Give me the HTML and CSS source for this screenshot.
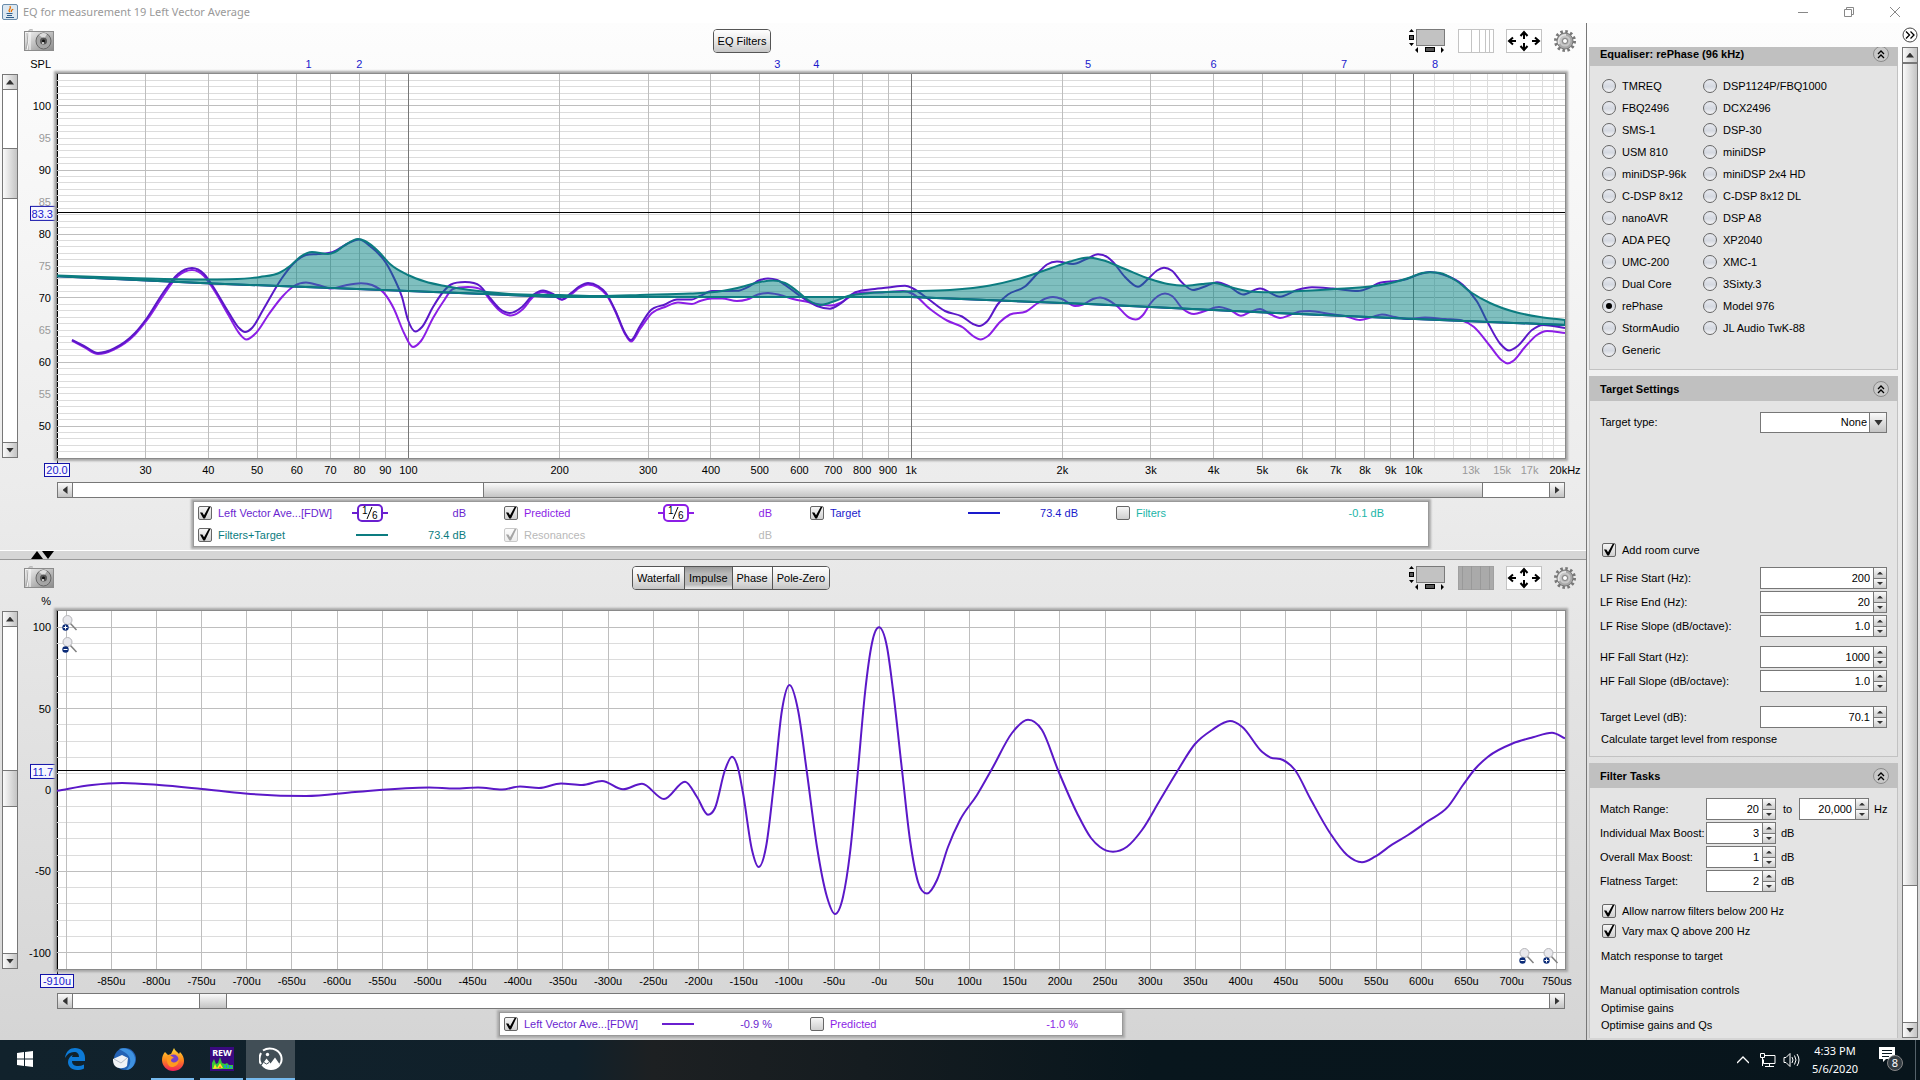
FILE: index.html
```html
<!DOCTYPE html>
<html lang="en">
<head>
  <meta charset="UTF-8">
  <meta name="viewport" content="width=device-width, initial-scale=1.0">
  <title>EQ for measurement 19 Left Vector Average</title>
  <link rel="stylesheet" href="styles.css">
</head>
<body>
  <!-- Shared icons -->
  <svg class="defs" width="0" height="0" aria-hidden="true">
    <defs>
      <linearGradient id="metal" x1="0" y1="0" x2="1" y2="1">
        <stop offset="0" stop-color="#f4f4f4"/>
        <stop offset="1" stop-color="#8a8a8a"/>
      </linearGradient>
      <linearGradient id="flame" x1="0" y1="0" x2="0" y2="1">
        <stop offset="0" stop-color="#ffd83a"/>
        <stop offset="0.5" stop-color="#ff8a1c"/>
        <stop offset="1" stop-color="#f0205a"/>
      </linearGradient>
      <symbol id="camera" viewBox="0 0 30 23">
        <path d="M4 2h2v-2h2v2" fill="none" stroke="#aaa"/>
        <rect x="0.500" y="2.500" width="29" height="19" fill="url(#metal)" stroke="#8c8c8c"/>
        <path d="M3 3q3 9 0 18M6 3v18" stroke="#fff" fill="none"/>
        <path d="M3 4q2 8-1 16" stroke="#aaa" fill="none"/>
        <ellipse cx="19.500" cy="12" rx="7.500" ry="8" fill="#a6a6a6" stroke="#666"/>
        <path d="M15 6a6 6 0 0 1 8-1l-3 5z" fill="#ddd"/>
        <circle cx="19.500" cy="12" r="3.500" fill="#555"/>
        <circle cx="19.500" cy="12" r="1.500" fill="#111"/>
        <circle cx="19" cy="14" r="1" fill="#eee"/>
      </symbol>
      <symbol id="scrollbars" viewBox="0 0 38 24">
        <rect x="8.500" y="0.500" width="28" height="16" fill="#c2c2c2" stroke="#7a7a7a"/>
        <path d="M1 3l2.500-3 2.500 3zM1 14l2.500 3 2.500-3zM10 18v6l-3-3zM33 18v6l3-3z" fill="#000"/>
        <rect x="1.500" y="6.500" width="4" height="4" fill="#555" stroke="#000"/>
        <rect x="17.500" y="18.500" width="9" height="4" fill="#555" stroke="#000"/>
      </symbol>
      <symbol id="arrows" viewBox="0 0 36 24">
        <rect x="0.500" y="0.500" width="35" height="23" fill="#fff" stroke="#c4c4c4"/>
        <g fill="none" stroke="#000" stroke-width="2">
          <path d="M18 10V4M14.500 7l3.500-4 3.500 4M18 14v6M14.500 17l3.500 4 3.500-4M10 12H4M7 8.500L3 12l4 3.500M26 12h6M29 8.500l4 3.500-4 3.500"/>
        </g>
      </symbol>
      <symbol id="gear" viewBox="0 0 22 22">
        <circle cx="11" cy="11" r="9.500" fill="none" stroke="#777" stroke-width="3" stroke-dasharray="2.500 2.475"/>
        <circle cx="11" cy="11" r="8" fill="#a8a8a8" stroke="#777"/>
        <path d="M5 14a7 7 0 0 1 7-9" fill="none" stroke="#e6e6e6" stroke-width="2"/>
        <circle cx="11" cy="11" r="4.500" fill="none" stroke="#c8c8c8" stroke-width="2"/>
        <circle cx="11" cy="11" r="2.500" fill="#fff" stroke="#808080"/>
      </symbol>
      <symbol id="collapse" viewBox="0 0 16 16">
        <circle cx="8" cy="8" r="7.500" fill="#c8c8c8" stroke="#8a8a8a"/>
        <path d="M5 8l3-3 3 3M5 12l3-3 3 3" fill="none" stroke="#000" stroke-width="1.300"/>
      </symbol>
      <symbol id="lens-in" viewBox="0 0 16 16">
        <path d="M8 8l6.500 7" stroke="#808080" stroke-width="1.500"/>
        <circle cx="5.500" cy="5" r="4.500" fill="#e8e8ec" stroke="#b4b4b8"/>
        <circle cx="3.500" cy="12.500" r="3.200" fill="#0c2c78"/>
        <path d="M1.500 12.500h4M3.500 10.500v4" stroke="#fff"/>
      </symbol>
      <symbol id="lens-out" viewBox="0 0 16 16">
        <path d="M8 8l6.500 7" stroke="#808080" stroke-width="1.500"/>
        <circle cx="5.500" cy="5" r="4.500" fill="#e8e8ec" stroke="#b4b4b8"/>
        <circle cx="3.500" cy="12.500" r="3.200" fill="#0c2c78"/>
        <path d="M1.500 12.500h4" stroke="#fff"/>
      </symbol>
      <symbol id="smoothing" viewBox="0 0 36 20">
        <path d="M0 10h6M30 10h6" stroke="currentColor" stroke-width="2"/>
        <rect x="6" y="2" width="24" height="16" rx="4" fill="#fff" stroke="currentColor" stroke-width="2"/>
        <path d="M15 16l5-12" stroke="#000"/>
        <text x="10" y="11" font-size="10">1</text>
        <text x="20" y="16" font-size="10">6</text>
      </symbol>
      <symbol id="trace" viewBox="0 0 36 20">
        <path d="M4 10h32" stroke="currentColor" stroke-width="2"/>
      </symbol>
    </defs>
  </svg>

  <header class="titlebar">
    <svg width="16" height="16" viewBox="0 0 16 16">
      <rect x="0.500" y="0.500" width="15" height="15" rx="1.500" fill="#dce8f2" stroke="#6a8cab"/>
      <path d="M8 8c-3-2 2-3 0-6M9.500 8c-1-2 1-2 1.500-3" fill="none" stroke="#e76f00" stroke-width="1.300"/>
      <path d="M4.500 9.500h6M5 11.500h5M4 13.500h8" stroke="#2f5f8c"/>
    </svg>
    <h1>EQ for measurement 19 Left Vector Average</h1>
    <div class="window-buttons">
      <button aria-label="Minimise"><svg width="10" height="10"><path d="M0 5.500h10" stroke="#888"/></svg></button>
      <button aria-label="Restore"><svg width="10" height="10"><path d="M0.500 2.500h7v7h-7zM2.500 2.500v-2h7v7h-2" fill="none" stroke="#888"/></svg></button>
      <button aria-label="Close"><svg width="10" height="10"><path d="M0 0l10 10M10 0L0 10" stroke="#888"/></svg></button>
    </div>
  </header>

  <main>
    <div class="graphs">
      <!-- SPL graph -->
      <section class="panel">
        <div class="toolbar">
          <button class="icon" aria-label="Capture"><svg width="30" height="23"><use href="#camera"/></svg></button>
          <div class="views single"><button>EQ Filters</button></div>
          <div class="tools">
            <button class="icon" aria-label="Scrollbars"><svg width="38" height="24"><use href="#scrollbars"/></svg></button>
            <button class="icon" aria-label="Log frequency axis"><svg width="36" height="24"><rect x="0.500" y="0.500" width="35" height="23" fill="#fff" stroke="#c4c4c4"/><path d="M13.500 0v24M21.500 0v24M27.500 0v24M31.500 0v24" stroke="#c4c4c4"/></svg></button>
            <button class="icon" aria-label="Limits"><svg width="36" height="24"><use href="#arrows"/></svg></button>
            <button class="icon" aria-label="Controls"><svg width="22" height="22"><use href="#gear"/></svg></button>
          </div>
        </div>
        <div class="unit">SPL</div>
        <svg class="markers" id="spl-markers"></svg>
        <div class="scroll vertical spl-v">
          <button class="up" aria-label="Up"></button><div class="thumb"></div><button class="down" aria-label="Down"></button>
        </div>
        <svg class="y-axis" id="spl-y"></svg>
        <div class="plot"><svg id="spl-plot"></svg></div>
        <svg class="x-axis" id="spl-x"></svg>
        <div class="scroll horizontal spl-h">
          <button class="left" aria-label="Left"></button><div class="thumb"></div><button class="right" aria-label="Right"></button>
        </div>
        <div class="legend four">
          <div class="entry measured"><input type="checkbox" id="l1" checked><label for="l1">Left Vector Ave...[FDW]</label><svg><use href="#smoothing"/></svg><span>dB</span></div>
          <div class="entry predicted"><input type="checkbox" id="l2" checked><label for="l2">Predicted</label><svg><use href="#smoothing"/></svg><span>dB</span></div>
          <div class="entry target"><input type="checkbox" id="l3" checked><label for="l3">Target</label><svg><use href="#trace"/></svg><span>73.4 dB</span></div>
          <div class="entry filters"><input type="checkbox" id="l4"><label for="l4">Filters</label><svg></svg><span>-0.1 dB</span></div>
          <div class="entry combined"><input type="checkbox" id="l5" checked><label for="l5">Filters+Target</label><svg><use href="#trace"/></svg><span>73.4 dB</span></div>
          <div class="entry resonances"><input type="checkbox" id="l6" checked disabled><label for="l6">Resonances</label><svg></svg><span>dB</span></div>
        </div>
      </section>

      <div class="divider"><svg width="24" height="8"><path d="M0 8l6-8 6 8zM11 0h12l-6 8z"/></svg></div>

      <!-- Impulse graph -->
      <section class="panel">
        <div class="toolbar">
          <button class="icon" aria-label="Capture"><svg width="30" height="23"><use href="#camera"/></svg></button>
          <div class="views"><button>Waterfall</button><button class="selected">Impulse</button><button>Phase</button><button>Pole-Zero</button></div>
          <div class="tools">
            <button class="icon" aria-label="Scrollbars"><svg width="38" height="24"><use href="#scrollbars"/></svg></button>
            <button class="icon" aria-label="Linear axis"><svg width="36" height="24"><rect x="0.500" y="0.500" width="35" height="23" fill="#aaa" stroke="#a0a0a0"/><path d="M4.500 0v24M13.500 0v24M22.500 0v24M31.500 0v24" stroke="#999"/></svg></button>
            <button class="icon" aria-label="Limits"><svg width="36" height="24"><use href="#arrows"/></svg></button>
            <button class="icon" aria-label="Controls"><svg width="22" height="22"><use href="#gear"/></svg></button>
          </div>
        </div>
        <div class="unit">%</div>
        <div class="markers"></div>
        <div class="scroll vertical imp-v">
          <button class="up" aria-label="Up"></button><div class="thumb"></div><button class="down" aria-label="Down"></button>
        </div>
        <svg class="y-axis" id="imp-y"></svg>
        <div class="plot">
          <svg id="imp-plot"></svg>
          <div class="zoom-y">
            <button class="icon" aria-label="Zoom in vertically"><svg width="16" height="16"><use href="#lens-in"/></svg></button>
            <button class="icon" aria-label="Zoom out vertically"><svg width="16" height="16"><use href="#lens-out"/></svg></button>
          </div>
          <div class="zoom-x">
            <button class="icon" aria-label="Zoom out horizontally"><svg width="16" height="16"><use href="#lens-out"/></svg></button>
            <button class="icon" aria-label="Zoom in horizontally"><svg width="16" height="16"><use href="#lens-in"/></svg></button>
          </div>
        </div>
        <svg class="x-axis" id="imp-x"></svg>
        <div class="scroll horizontal imp-h">
          <button class="left" aria-label="Left"></button><div class="thumb"></div><button class="right" aria-label="Right"></button>
        </div>
        <div class="legend two">
          <div class="entry measured"><input type="checkbox" id="m1" checked><label for="m1">Left Vector Ave...[FDW]</label><svg><use href="#trace"/></svg><span>-0.9 %</span></div>
          <div class="entry predicted"><input type="checkbox" id="m2"><label for="m2">Predicted</label><svg></svg><span>-1.0 %</span></div>
        </div>
      </section>
    </div>

    <aside>
      <button class="icon hide-panel" aria-label="Hide panel"><svg width="16" height="16" viewBox="0 0 16 16"><circle cx="8" cy="8" r="7" fill="#fff" stroke="#444"/><path d="M4 4.500L7.500 8 4 11.500M8.500 4.500L12 8l-3.500 3.500" fill="none" stroke="#000" stroke-width="1.300"/></svg></button>
      <div class="sections">
        <section>
          <h2>Equaliser: rePhase (96 kHz)<button class="icon" aria-label="Collapse"><svg width="16" height="16"><use href="#collapse"/></svg></button></h2>
          <div class="body equalisers">
            <label><input type="radio" name="eq">TMREQ</label>
            <label><input type="radio" name="eq">DSP1124P/FBQ1000</label>
            <label><input type="radio" name="eq">FBQ2496</label>
            <label><input type="radio" name="eq">DCX2496</label>
            <label><input type="radio" name="eq">SMS-1</label>
            <label><input type="radio" name="eq">DSP-30</label>
            <label><input type="radio" name="eq">USM 810</label>
            <label><input type="radio" name="eq">miniDSP</label>
            <label><input type="radio" name="eq">miniDSP-96k</label>
            <label><input type="radio" name="eq">miniDSP 2x4 HD</label>
            <label><input type="radio" name="eq">C-DSP 8x12</label>
            <label><input type="radio" name="eq">C-DSP 8x12 DL</label>
            <label><input type="radio" name="eq">nanoAVR</label>
            <label><input type="radio" name="eq">DSP A8</label>
            <label><input type="radio" name="eq">ADA PEQ</label>
            <label><input type="radio" name="eq">XP2040</label>
            <label><input type="radio" name="eq">UMC-200</label>
            <label><input type="radio" name="eq">XMC-1</label>
            <label><input type="radio" name="eq">Dual Core</label>
            <label><input type="radio" name="eq">3Sixty.3</label>
            <label><input type="radio" name="eq" checked>rePhase</label>
            <label><input type="radio" name="eq">Model 976</label>
            <label><input type="radio" name="eq">StormAudio</label>
            <label><input type="radio" name="eq">JL Audio TwK-88</label>
            <label><input type="radio" name="eq">Generic</label>
          </div>
        </section>

        <section>
          <h2>Target Settings<button class="icon" aria-label="Collapse"><svg width="16" height="16"><use href="#collapse"/></svg></button></h2>
          <div class="body settings">
            <div class="row type">
              <label for="type">Target type:</label>
              <span class="select"><select id="type"><option>None</option></select></span>
            </div>
            <label class="check room"><input type="checkbox" checked>Add room curve</label>
            <div class="row"><label for="lfs">LF Rise Start (Hz):</label><span class="spinner"><input type="text" id="lfs" value="200"><button class="up" aria-label="Increase"></button><button class="down" aria-label="Decrease"></button></span></div>
            <div class="row"><label for="lfe">LF Rise End (Hz):</label><span class="spinner"><input type="text" id="lfe" value="20"><button class="up" aria-label="Increase"></button><button class="down" aria-label="Decrease"></button></span></div>
            <div class="row"><label for="lfr">LF Rise Slope (dB/octave):</label><span class="spinner"><input type="text" id="lfr" value="1.0"><button class="up" aria-label="Increase"></button><button class="down" aria-label="Decrease"></button></span></div>
            <div class="row hf"><label for="hfs">HF Fall Start (Hz):</label><span class="spinner"><input type="text" id="hfs" value="1000"><button class="up" aria-label="Increase"></button><button class="down" aria-label="Decrease"></button></span></div>
            <div class="row"><label for="hfr">HF Fall Slope (dB/octave):</label><span class="spinner"><input type="text" id="hfr" value="1.0"><button class="up" aria-label="Increase"></button><button class="down" aria-label="Decrease"></button></span></div>
            <div class="row level"><label for="lvl">Target Level (dB):</label><span class="spinner"><input type="text" id="lvl" value="70.1"><button class="up" aria-label="Increase"></button><button class="down" aria-label="Decrease"></button></span></div>
            <button class="task">Calculate target level from response</button>
          </div>
        </section>

        <section>
          <h2>Filter Tasks<button class="icon" aria-label="Collapse"><svg width="16" height="16"><use href="#collapse"/></svg></button></h2>
          <div class="body tasks">
            <div class="row"><label for="from">Match Range:</label><span class="spinner"><input type="text" id="from" value="20"><button class="up" aria-label="Increase"></button><button class="down" aria-label="Decrease"></button></span><label class="to" for="upto">to</label><span class="spinner"><input type="text" id="upto" value="20,000"><button class="up" aria-label="Increase"></button><button class="down" aria-label="Decrease"></button></span><span>Hz</span></div>
            <div class="row"><label for="ind">Individual Max Boost:</label><span class="spinner"><input type="text" id="ind" value="3"><button class="up" aria-label="Increase"></button><button class="down" aria-label="Decrease"></button></span><span>dB</span></div>
            <div class="row"><label for="ovr">Overall Max Boost:</label><span class="spinner"><input type="text" id="ovr" value="1"><button class="up" aria-label="Increase"></button><button class="down" aria-label="Decrease"></button></span><span>dB</span></div>
            <div class="row"><label for="flat">Flatness Target:</label><span class="spinner"><input type="text" id="flat" value="2"><button class="up" aria-label="Increase"></button><button class="down" aria-label="Decrease"></button></span><span>dB</span></div>
            <div class="checks">
              <label class="check"><input type="checkbox" checked>Allow narrow filters below 200 Hz</label>
              <label class="check"><input type="checkbox" checked>Vary max Q above 200 Hz</label>
            </div>
            <button class="task match">Match response to target</button>
            <p>Manual optimisation controls</p>
            <button class="task">Optimise gains</button>
            <button class="task">Optimise gains and Qs</button>
            <button class="task">Optimise gains, Qs and frequencies</button>
          </div>
        </section>
      </div>
      <div class="scroll vertical side-v">
        <button class="up" aria-label="Up"></button><div class="thumb"></div><button class="down" aria-label="Down"></button>
      </div>
    </aside>
  </main>

  <footer class="taskbar">
    <button class="start" aria-label="Start"><svg width="16" height="18" viewBox="0 0 16 18"><path d="M0 3l7-1v6.500H0zM8 2l8-1v7.500H8zM0 9.500h7V16l-7-1zM8 9.500h8V17l-8-1z" fill="#fff"/></svg></button>
    <button aria-label="Edge"><svg width="20" height="22" viewBox="0 0 20 22"><path d="M0 10C1 3 5 0 10 0c6 0 10 4 10 10v3H7c0 4 3 5 6 5 2 0 4-.500 6-1.500v4C17 21.500 14.500 22 12 22c-6 0-9-4-9-8 0-3 2-6 5-7C7 8 7 9 7 9h7c0-3-1.500-5-5-5-4 0-7 2-9 6z" fill="#0d7ad6"/></svg></button>
    <button aria-label="Thunderbird"><svg width="24" height="24" viewBox="0 0 24 24"><circle cx="13" cy="12" r="11" fill="#2462b4"/><path d="M7 2c9-3 17 4 16 12-1 6-5 9-9 9 5-5 6-11 1-16-2-2-5-3-8-5z" fill="#3f92e0"/><path d="M1 12l9-4 6 3-1 8c-3 3-9 3-12 0-2-2-2-5-2-7z" fill="#f1f3f6"/><path d="M2 12l7 4 6-5" fill="none" stroke="#b4bcc8"/></svg></button>
    <button class="open" aria-label="Firefox"><svg width="24" height="24" viewBox="0 0 24 24"><path d="M4 5l3 3 3-1 3-6c1 3 4 4 5 6l1-2c3 3 4 6 4 9 0 6-5 10-11 10S1 19 1 13c0-3 1-6 3-8z" fill="url(#flame)"/><circle cx="12.500" cy="12.500" r="5" fill="#7640c8"/><path d="M6 9c3-1 5 0 7 2-2 0-3 1-3 3 3 3 6 1 8-2 0 6-4 8-7 8-4 0-6-5-5-11z" fill="#ff9a1f"/></svg></button>
    <button class="open" aria-label="REW"><svg width="24" height="24" viewBox="0 0 24 24"><rect width="24" height="24" fill="#3a0a80"/><text x="12" y="9" text-anchor="middle" font-size="9" font-weight="bold" fill="#fff">REW</text><path d="M2 22V16l2-4 2 5 2-1 2-6 2 6 3 1 2-1 2 2h4v4z" fill="#35c838"/><path d="M3 22l2-5 2 4 3-5 3 5z" fill="#ffe02a"/><path d="M9 21l1-2 1 2z" fill="#e33"/><path d="M15 21v-3M18 21v-3M21 21v-2" stroke="#18a0c8" stroke-width="2"/></svg></button>
    <button class="open active" aria-label="Photos"><svg width="24" height="24" viewBox="0 0 24 24"><path d="M4 3.500c6-4 15-2 18 5 1 3 1 6-1 9M2 6c-2 4-2 8 0 11" fill="none" stroke="#fff" stroke-width="2"/><circle cx="8.500" cy="7.500" r="1.700" fill="#fff"/><path d="M2.500 18.500l5-7 4 5 4.500-6 5.500 8c-5 6-14 6-19 0z" fill="#fff"/><path d="M5 15.500l2.500 1.500 2.500-1.500" stroke="#414e56" fill="none"/></svg></button>
    <div class="tray">
      <button aria-label="Show hidden icons"><svg width="12" height="8"><path d="M0 7l6-6 6 6" fill="none" stroke="#fff" stroke-width="1.300"/></svg></button>
      <button aria-label="Network"><svg width="17" height="14"><path d="M5 2.500h11v8H4.500v-4M10.500 10v3M6 13.500h9M1.500 0.500h4v4h-4zM3.500 5v8" fill="none" stroke="#fff"/></svg></button>
      <button aria-label="Volume"><svg width="17" height="16"><path d="M1 5.500h2l4-4v13l-4-4H1zM9 5q2 3 0 6M11.500 3.500q3 4.500 0 9M14 2q4 6 0 12" fill="none" stroke="#fff"/></svg></button>
    </div>
    <div class="clock"><time>4:33 PM</time><time>5/6/2020</time></div>
    <button class="notify" aria-label="Notifications"><svg width="26" height="26" viewBox="0 0 26 26"><path d="M1 1h16v12H8l-3 3v-3H1z" fill="#fff"/><path d="M4 4.500h10M4 7.500h10M4 10.500h7" stroke="#0b1a22"/><circle cx="17" cy="17" r="7.500" fill="#333c42" stroke="#888"/><text x="17" y="21" text-anchor="middle" font-size="11" fill="#fff">8</text></svg></button>
    <button class="desktop" aria-label="Show desktop"></button>
  </footer>
  <script src="script.js"></script>
</body>
</html>
```

FILE: styles.css
```css
* {
  box-sizing: border-box;
}

body {
  margin: 0;
  height: 100vh;
  display: flex;
  flex-direction: column;
  overflow: hidden;
  font-family: "Liberation Sans", Arial, sans-serif;
  font-size: 11px;
  color: #000;
}

button, input, select {
  font: inherit;
  color: inherit;
  margin: 0;
}

button {
  padding: 0;
  border: none;
  background: none;
}

svg {
  display: block;
}

.defs {
  position: absolute;
}

/* Title bar */
.titlebar {
  flex: 0 0 23px;
  display: flex;
  align-items: center;
  gap: 5px;
  padding: 0 2px;
  background: #fff;
}

.titlebar h1 {
  margin: 0;
  flex: 1;
  font: 11px "Noto Sans", "Open Sans", sans-serif;
  color: #999;
}

.window-buttons {
  display: flex;
}

.window-buttons button {
  width: 46px;
  height: 20px;
  display: grid;
  place-items: center;
}

main {
  flex: 1;
  min-height: 0;
  display: flex;
  background: linear-gradient(#fdfdfd, #ececec 45%, #d5d5d5);
}

/* Graph area */
.graphs {
  flex: 1;
  min-width: 0;
  display: grid;
  grid-template-rows: 527fr 10px 480fr;
}

.panel {
  min-height: 0;
  display: grid;
  grid-template-columns: 18px 39px 1fr 21px;
  grid-template-rows: 35px 16px 1fr 24px 16px auto;
}

.toolbar {
  grid-column: 1 / -1;
  display: flex;
  align-items: center;
  justify-content: space-between;
  padding: 0 10px 0 24px;
}

.tools {
  display: flex;
  align-items: center;
  gap: 12px;
}

.views {
  display: flex;
  border: 1px solid #555;
  border-radius: 4px;
  overflow: hidden;
}

.views.single {
  margin-left: 22px;
}

.views button {
  height: 22px;
  padding: 0 4px;
  background: linear-gradient(#fff, #ececec 45%, #c6c6c6);
}

.views button + button {
  border-left: 1px solid #555;
}

.views .selected {
  background: linear-gradient(#999, #b8b8b8 30%, #bbb 80%, #eee);
}

.unit {
  grid-column: 1 / 3;
  padding-right: 6px;
  text-align: right;
  line-height: 13px;
}

.markers {
  grid-column: 3;
  width: 100%;
  height: 16px;
  overflow: visible;
}

.markers text {
  fill: #1a1acc;
}

.y-axis {
  grid-column: 2;
  grid-row: 3;
  width: 100%;
  height: 100%;
  overflow: visible;
}

.y-axis text {
  text-anchor: end;
}

.x-axis {
  grid-column: 3;
  width: 100%;
  height: 24px;
  overflow: visible;
}

.x-axis text, .markers text {
  text-anchor: middle;
}

.dim {
  fill: #999;
}

.readout rect {
  fill: #f6f6ff;
  stroke: #1212a8;
}

.readout text {
  fill: #1a1acc;
}

.plot {
  position: relative;
  grid-column: 3;
  grid-row: 3;
  min-height: 0;
  background: #fff;
  box-shadow: inset 1px 0 #000, 0 0 0 1px #8a8a8a, 0 0 2px 3px #a8a8a8;
}

.plot > svg {
  position: absolute;
  width: 100%;
  height: 100%;
}

.zoom-y, .zoom-x {
  position: absolute;
  display: flex;
}

.zoom-y {
  left: 5px;
  top: 4px;
  flex-direction: column;
  gap: 6px;
}

.zoom-x {
  right: 6px;
  bottom: 5px;
  gap: 8px;
}

.grid {
  shape-rendering: crispEdges;
}

.minor {
  stroke: #dcdcdc;
}

.major {
  stroke: #bebebe;
}

.decade {
  stroke: #777;
}

.cursor {
  stroke: #000;
}

.curve {
  fill: none;
  stroke-width: 2;
  vector-effect: non-scaling-stroke;
}

.curve.measured {
  stroke: #5b18c8;
}

.curve.predicted {
  stroke: #8c1ee6;
}

.curve.target {
  stroke: #1010a0;
}

.curve.area {
  fill: rgba(0, 128, 128, 0.5);
  stroke: #0c7c80;
}

/* Scroll bars */
.scroll {
  display: grid;
  border: 1px solid #777;
  background: #fff;
}

.scroll button, .scroll .thumb {
  background: linear-gradient(90deg, #fafafa, #c4c4c4);
}

.scroll button {
  display: grid;
  place-items: center;
}

.vertical {
  width: 16px;
  margin-left: 2px;
}

.panel .vertical {
  grid-column: 1;
  grid-row: 3;
}

.vertical .up, .vertical .thumb {
  border-bottom: 1px solid #777;
}

.vertical .down, .vertical .thumb {
  border-top: 1px solid #777;
}

.vertical .thumb, .vertical .down {
  grid-column: 1;
}

.vertical .thumb {
  grid-row: 3;
}

.vertical .down {
  grid-row: 5;
}

.spl-v {
  grid-template-rows: 15px 58fr 51fr 244fr 15px;
}

.imp-v {
  grid-template-rows: 15px 144fr 37fr 147fr 15px;
}

.side-v {
  grid-template-rows: 15px 0 823fr 136fr 15px;
}

.horizontal {
  grid-column: 3;
}

.horizontal > * {
  grid-row: 1;
}

.horizontal button, .horizontal .thumb {
  background: linear-gradient(#fafafa, #c4c4c4);
}

.horizontal .left, .horizontal .thumb {
  border-right: 1px solid #777;
}

.horizontal .right, .horizontal .thumb {
  border-left: 1px solid #777;
}

.horizontal .thumb {
  grid-column: 3;
}

.horizontal .right {
  grid-column: 5;
}

.spl-h {
  grid-template-columns: 15px 410fr 1000fr 66fr 15px;
}

.imp-h {
  grid-template-columns: 15px 126fr 28fr 1324fr 15px;
}

.up::before, .down::before, .left::before, .right::before {
  content: "";
  background: #333;
}

.up::before {
  width: 8px;
  height: 5px;
  clip-path: polygon(50% 0, 100% 100%, 0 100%);
}

.down::before {
  width: 8px;
  height: 5px;
  clip-path: polygon(0 0, 100% 0, 50% 100%);
}

.left::before {
  width: 5px;
  height: 8px;
  clip-path: polygon(100% 0, 100% 100%, 0 50%);
}

.right::before {
  width: 5px;
  height: 8px;
  clip-path: polygon(0 0, 100% 50%, 0 100%);
}

/* Legends */
.legend {
  grid-column: 3;
  justify-self: center;
  display: grid;
  grid-auto-rows: 22px;
  padding: 0 6px 0 4px;
  background: #fff;
  border: 1px solid #999;
  box-shadow: 0 0 2px 2px #aaa;
}

.legend.four {
  grid-template-columns: repeat(4, 306px);
  margin: 3px 0;
}

.legend.two {
  grid-template-columns: repeat(2, 306px);
  margin: 3px 0 4px;
}

.entry {
  display: grid;
  grid-template-columns: 20px 134px 36px 78px;
  align-items: center;
}

.entry svg {
  width: 36px;
  height: 20px;
}

.entry svg text {
  fill: #000;
}

.entry span {
  text-align: right;
}

.entry.measured {
  color: #6a1fd0;
}

.entry.predicted {
  color: #8c1ee6;
}

.entry.target {
  color: #1a1acc;
}

.entry.filters {
  color: #1bb5a8;
}

.entry.combined {
  color: #0c7c80;
}

.entry.resonances {
  color: #b8b8b8;
}

input[type="checkbox"], input[type="radio"] {
  appearance: none;
  width: 14px;
  height: 14px;
  border: 1px solid #666;
  border-radius: 2px;
  background: linear-gradient(#f6f6f6, #cfcfcf);
  display: grid;
  place-items: center;
}

input[type="checkbox"]:checked::before {
  content: "";
  width: 12px;
  height: 12px;
  background: #000;
  clip-path: polygon(8% 45%, 28% 45%, 42% 68%, 80% 0, 95% 0, 50% 95%, 36% 95%);
}

input[type="checkbox"]:disabled {
  opacity: 0.35;
}

input[type="radio"] {
  border-radius: 50%;
  background: linear-gradient(#e8eaf0, #d4d8e0 55%, #f4f4f6);
}

input[type="radio"]:checked::before {
  content: "";
  width: 6px;
  height: 6px;
  border-radius: 50%;
  background: #000;
}

.divider {
  display: flex;
  align-items: center;
  padding-left: 31px;
  background: #d6d6d6;
  border-top: 1px solid #fff;
  border-bottom: 1px solid #999;
}

/* Side panel */
aside {
  flex: 0 0 334px;
  border-left: 1px solid #777;
  display: grid;
  grid-template-columns: 1fr 20px;
  grid-template-rows: 24px 1fr;
  padding-bottom: 2px;
}

.hide-panel {
  grid-column: 2;
  justify-self: center;
  align-self: center;
}

.sections {
  min-height: 0;
  overflow: hidden;
  padding: 0 2px;
  display: flex;
  flex-direction: column;
  gap: 6px;
}

.sections section {
  flex: none;
}

.sections section:first-child {
  margin-top: -6px;
}

.sections h2 {
  margin: 0;
  height: 25px;
  padding: 0 9px 0 11px;
  display: flex;
  align-items: center;
  justify-content: space-between;
  font-size: 11px;
  background: #c0c0c0;
}

.body {
  border: 1px solid #c2c2c2;
  border-top: none;
  background: #e4e4e4;
  padding-left: 10px;
}

.equalisers {
  display: grid;
  grid-template-columns: 101px 1fr;
  grid-auto-rows: 22px;
  padding: 9px 0 8px 12px;
}

.equalisers label, .check {
  display: flex;
  align-items: center;
  gap: 6px;
}

.row {
  display: flex;
  align-items: center;
  height: 22px;
  margin-bottom: 2px;
}

.settings {
  padding-top: 10px;
  padding-right: 10px;
  padding-bottom: 9px;
}

.settings .row {
  justify-content: space-between;
}

.settings .spinner, .select {
  width: 127px;
}

.settings .type {
  margin-bottom: 107px;
}

.settings .room {
  margin-bottom: 7px;
}

.check {
  height: 20px;
  padding-left: 2px;
}

.settings .hf {
  margin-top: 9px;
}

.settings .level {
  margin-top: 14px;
}

.select {
  position: relative;
}

.select select {
  appearance: none;
  width: 100%;
  height: 21px;
  padding: 0 19px 0 4px;
  text-align: right;
  text-align-last: right;
  border: 1px solid #777;
  border-radius: 0;
  background: #fff;
}

.select::before {
  content: "";
  position: absolute;
  right: 1px;
  top: 1px;
  bottom: 1px;
  width: 16px;
  border-left: 1px solid #777;
  background: linear-gradient(#fafafa, #c4c4c4);
  pointer-events: none;
}

.select::after {
  content: "";
  position: absolute;
  right: 4px;
  top: 8px;
  width: 9px;
  height: 6px;
  background: #333;
  clip-path: polygon(0 0, 100% 0, 50% 100%);
  pointer-events: none;
}

.spinner {
  display: grid;
  grid-template-columns: 1fr 12px;
  grid-template-rows: 1fr 1fr;
  width: 70px;
  height: 22px;
  border: 1px solid #777;
}

.spinner input {
  grid-row: 1 / 3;
  min-width: 0;
  width: 100%;
  height: 20px;
  padding: 0 3px;
  border: none;
  border-right: 1px solid #777;
  text-align: right;
  background: #fff;
}

.spinner button {
  display: grid;
  place-items: center;
  background: linear-gradient(#fafafa, #ccc);
}

.spinner .down {
  border-top: 1px solid #777;
}

.spinner .up::before, .spinner .down::before {
  width: 6px;
  height: 3px;
}

.task {
  display: block;
  height: 17px;
  padding-left: 1px;
}

.tasks {
  padding-top: 10px;
}

.tasks .row label:first-child {
  width: 106px;
}

.tasks .row > span:last-child {
  margin-left: 5px;
}

.tasks .to {
  width: 23px;
  text-align: center;
}

.checks {
  margin-top: 9px;
}

.tasks .match {
  margin: 6px 0 18px;
}

.tasks p {
  margin: 0;
  line-height: 17px;
}

/* Taskbar */
.taskbar {
  flex: 0 0 40px;
  display: flex;
  background: linear-gradient(90deg, #11222c, #10202a 30%, #1d2022 34%, #151c20 45%, #08161d 60%, #08151c);
  color: #fff;
  font-family: "Noto Sans", "Open Sans", sans-serif;
}

.taskbar button {
  display: grid;
  place-items: center;
}

.taskbar > button {
  width: 49px;
  border-bottom: 2px solid transparent;
}

.taskbar > .start {
  width: 50px;
}

.taskbar > .open {
  border-image: linear-gradient(90deg, transparent 10%, #76b9ed 10%, #76b9ed 90%, transparent 90%) 2;
}

.taskbar > .active {
  background: #414e56;
  border-image: none;
  border-color: #76b9ed;
}

.tray {
  margin-left: auto;
  display: flex;
  align-items: center;
}

.tray button {
  width: 24px;
  height: 40px;
}

.clock {
  width: 64px;
  display: flex;
  flex-direction: column;
  justify-content: center;
  text-align: center;
  line-height: 18px;
}

.taskbar > .notify {
  width: 48px;
}

.taskbar > .desktop {
  width: 5px;
  border: none;
  border-left: 1px solid #55626a;
}
```

FILE: script.js
```javascript
const NS = 'http://www.w3.org/2000/svg';

function add(parent, tag, attrs, text) {
  const el = document.createElementNS(NS, tag);
  for (const name in attrs) el.setAttribute(name, attrs[name]);
  if (text !== undefined) el.textContent = text;
  parent.appendChild(el);
  return el;
}

const byId = id => document.getElementById(id);
const pct = v => (v * 100).toFixed(3) + '%';

function hline(svg, pos, cls) {
  add(svg, 'line', { x1: 0, x2: '100%', y1: pct(pos), y2: pct(pos), class: 'grid ' + cls });
}

function vline(svg, pos, cls) {
  add(svg, 'line', { x1: pct(pos), x2: pct(pos), y1: 0, y2: '100%', class: 'grid ' + cls });
}

// Monotone cubic through [x, y] pairs, so peaks do not overshoot
function smooth(flat) {
  const p = [];
  for (let i = 0; i < flat.length; i += 2) p.push([flat[i], flat[i + 1]]);
  const w = p.slice(1).map((q, i) => q[0] - p[i][0]);
  const s = p.slice(1).map((q, i) => (q[1] - p[i][1]) / w[i]);
  const m = p.map((q, i) => {
    if (i === 0) return s[0];
    if (i === p.length - 1) return s[i - 1];
    const a = s[i - 1];
    const b = s[i];
    if (a * b <= 0) return 0;
    const mean = (a * w[i] + b * w[i - 1]) / (w[i] + w[i - 1]);
    return Math.sign(a) * Math.min(Math.abs(mean), 3 * Math.abs(a), 3 * Math.abs(b));
  });
  let d = p[0].join(' ');
  for (let i = 1; i < p.length; i++) {
    const h = w[i - 1] / 3;
    d += ` C${(p[i - 1][0] + h).toFixed(1)} ${(p[i - 1][1] + m[i - 1] * h).toFixed(1)} ` +
      `${(p[i][0] - h).toFixed(1)} ${(p[i][1] - m[i] * h).toFixed(1)} ${p[i][0]} ${p[i][1]}`;
  }
  return d;
}

function readoutY(svg, pos, width, text) {
  const g = add(svg, 'g', { class: 'readout' });
  add(g, 'rect', { x: 37 - width, y: pct(pos), width: width, height: 14, transform: 'translate(0.5 -6.5)' });
  add(g, 'text', { x: 35, y: pct(pos), dy: 5 }, text);
}

function readoutX(svg, width, text) {
  const g = add(svg, 'g', { class: 'readout' });
  add(g, 'line', { x1: 0.5, x2: 0.5, y1: 0, y2: 5, stroke: '#000' });
  add(g, 'rect', { x: -width / 2, y: 5.5, width: width, height: 13 });
  add(g, 'text', { x: 0, y: 16 }, text);
}

// SPL graph: 20 Hz - 20 kHz log, 45 - 105 dB
const freqPos = f => Math.log10(f / 20) / 3;
const dbPos = db => (105 - db) / 60;

const measured = [72,340,84,346,98,353,114,348.5,135,333,147,318,163,293,178,274,192,268,204,274,212,285,229,313,239,328,245,332,252,328,263,310,282,278,294,263,306,255,318,254,333,252,347,244,359,239.5,371,247,386,263,394,278,402,297,408,320,415.5,331.5,422,327,433,307,443,292,451,284.5,465,282,480,286,490,298,500,309,510,313,522,307,533,295,543,290.5,553,294,562,299.5,571,293,580,286,588,283,598,286,606,293,616,312,624.5,332,631,340,640,326,650,311,665,304.5,677,299.5,692,299.5,700,296,712,291,737,290.8,748,287,760,280,768,278.5,777,280,790,288.5,803,298,817,306,830,308.7,840,304,853,293.5,870,289.5,888,287.5,905,285.7,913,288.5,927,298,945,311,962,316.5,973,324,979,326,987,321.5,998,304,1008,294.5,1025,286.5,1037,274,1047,264.5,1057,261.5,1073,264,1087,258.7,1098,254.3,1108,257.5,1113,262,1125,277,1138,286.7,1148,279,1157,270.5,1164,267.8,1172,270.7,1182,282.5,1193,290,1205,286.5,1217,282.3,1228,285.7,1243,294.5,1260,288.5,1280,296.7,1297,290,1312,287.3,1333,288.5,1358,291,1368,288.3,1380,282.7,1397,281,1407,279,1417,275,1430,272,1443,274.5,1463,285,1477,301.5,1488,323,1500,343.5,1509,350.5,1518,345.7,1532,330,1543,325,1565,328];
const predicted = [72,340.5,84,347,98,354,114,349.5,135,334.5,147,320,163,296,178,276,192,270,204,276,212,287,229,316,239,333,246.5,339.5,256,333,269,314,282,297,294,286,306,282.5,318,285,331,288.5,345,285.5,361,283.3,372,285,384,293,394,309,404,333,413,347,421,341,433,318,443,302,453,289,468,287,482,290,490,300,500,311,511,315.5,523,309,533,297,543,292,553,295,562,299.7,571,294.5,580,287.5,588,284.5,598,287.5,606,294.5,616,313,624.5,333,631,341.5,640,329,652,313,665,307,678,302.5,692,304,700,301,712,298.5,722,298.5,737,301,747,299.5,758,294.5,768,293,780,295,793,299,808,302,820,304.5,831,305.5,840,303,853,295,863,292.5,880,292.5,903,291,913,294,930,309,947,320.5,963,327.5,973,336,980.5,339.5,988,336,1000,322,1010,314.5,1026,311.5,1037,303.5,1047,298,1053,297,1062,299,1075,306,1083,304.5,1093,299,1100,297.5,1108,300,1117,306,1129,317.5,1135.5,319.5,1143,315,1150,304,1158,296,1165,293.5,1172,296,1183,309,1194,314,1205,311,1219,307,1230,310,1241,315.7,1250,312,1260,309,1270,314,1280,318,1290,315,1298,312,1310,311,1330,314,1345,316,1360,320,1372,317,1382,314.5,1395,317,1408,319,1425,317.5,1445,319,1462,320.5,1474,327,1490,346,1502,360.5,1507.5,363.5,1513,361,1525,347,1537,335,1547,331,1565,333];
const combined = [57,275.5,130,278,200,279.5,230,279.3,260,277,280,272.5,290,266,300,257,312,252,328,254,335,252,345,245,358,239,365,241,378,251,390,264,408,275,425,281.5,445,286,470,290,510,294,560,295,600,296,640,295,690,293.5,722,291,745,286,760,282,773,280.5,785,283,797,291,808,300,820,305,835,301,848,296,870,293,905,291.5,950,290,990,285.5,1020,278.5,1050,268.5,1070,261.5,1088,257.5,1102,260,1125,269,1150,279,1168,284,1185,285.7,1202,284,1214,283,1228,286.5,1250,291.5,1270,292.3,1300,291,1335,289,1370,286.5,1395,282,1410,277.5,1422,273,1430,272.3,1440,273,1455,280,1472,293,1490,303,1515,312,1540,317,1565,320];
const target = '57 276.3 200 283 408 291 540 296.3 560 297 911 297 1088 304 1265 312.5 1415 319 1565 325';
const targetBack = '1565 325 1415 319 1265 312.5 1088 304 911 297 560 297 540 296.3 408 291 200 283 57 276.3';

const spl = byId('spl-plot');
for (let db = 46; db < 105; db++) hline(spl, dbPos(db), db % 10 ? 'minor' : 'major');
for (let k = 11; k < 20; k++) vline(spl, freqPos(k * 1000), 'minor');
for (const dec of [10, 100, 1000]) {
  for (let n = 2; n < 10; n++) if (n * dec > 20) vline(spl, freqPos(n * dec), 'major');
  vline(spl, freqPos(dec * 10), 'decade');
}
hline(spl, dbPos(83.3), 'cursor');

const splCurves = add(spl, 'svg', { viewBox: '57 74 1508 384', width: '100%', height: '100%', preserveAspectRatio: 'none' });
add(splCurves, 'path', { d: 'M' + smooth(predicted), class: 'curve predicted' });
add(splCurves, 'path', { d: 'M' + smooth(measured), class: 'curve measured' });
add(splCurves, 'path', { d: 'M' + target, class: 'curve target' });
add(splCurves, 'path', { d: 'M' + smooth(combined) + ' L' + targetBack + 'Z', class: 'curve area' });

for (let db = 50; db <= 100; db += 5) {
  add(byId('spl-y'), 'text', { x: 33, y: pct(dbPos(db)), dy: 4, class: db % 10 ? 'dim' : '' }, db);
}
readoutY(byId('spl-y'), dbPos(83.3), 25, '83.3');

for (const f of [30, 40, 50, 60, 70, 80, 90, 100, 200, 300, 400, 500, 600, 700, 800, 900]) {
  add(byId('spl-x'), 'text', { x: pct(freqPos(f)), y: 16 }, f);
}
for (const k of [1, 2, 3, 4, 5, 6, 7, 8, 9, 10, 13, 15, 17]) {
  add(byId('spl-x'), 'text', { x: pct(freqPos(k * 1000)), y: 16, class: k > 10 ? 'dim' : '' }, k + 'k');
}
add(byId('spl-x'), 'text', { x: '100%', y: 16 }, '20kHz');
readoutX(byId('spl-x'), 25, '20.0');

[63.3, 79.9, 542, 648, 2250, 4000, 7270, 11030].forEach((f, i) => {
  add(byId('spl-markers'), 'text', { x: pct(freqPos(f)), y: 10 }, i + 1);
});

// Impulse graph: -910 to 759 us, +/-110 %
const timePos = t => (t + 910) / 1669;
const levelPos = v => (110 - v) / 220;

const impulse = [57,790.7,92,785,122,783,159,785,202,789,245,793.5,306,796,355,792,429,787.5,455,788.5,478,787.5,502,789.5,520,786.5,539,788,561,783.5,582,785,602,781,623,789.3,642,783.7,664,799,685,781.7,697,797,708,814.7,715,808,725,770,732,756.7,738,768,743,793,752,850,758.7,867,766,847,774,783,782,710,789.5,685,798,710,807,773,817,847,827,897,835,914,843,897,850,853,858,770,865,693,872,643,879,627.3,887,647,893,690,902,770,910,840,918,882,927,893.5,937,880,948,847,960,820,977,795,993,767,1012,733,1028,719.7,1042,730,1058,770,1077,813,1091,838,1100,847,1113,851.7,1127,846.7,1142,830,1160,800,1177,771.7,1195,744,1212,730,1230,721,1242,726.7,1262,751.7,1270,757.3,1283,760,1295,770,1310,798,1330,833,1347,855,1362,862.3,1375,856.7,1392,844.7,1408,835,1427,821.7,1448,806.7,1463,785,1475,769,1488,756.7,1513,743.3,1533,737.3,1552,732.7,1565,738.3];

const imp = byId('imp-plot');
for (let v = -100; v <= 100; v += 10) hline(imp, levelPos(v), v % 50 ? 'minor' : 'major');
for (let t = -900; t <= 750; t += 50) vline(imp, timePos(t), 'major');
hline(imp, levelPos(11.7), 'cursor');

const impCurves = add(imp, 'svg', { viewBox: '57 611 1508 358', width: '100%', height: '100%', preserveAspectRatio: 'none' });
add(impCurves, 'path', { d: 'M' + smooth(impulse), class: 'curve measured' });

for (let v = -100; v <= 100; v += 50) {
  add(byId('imp-y'), 'text', { x: 33, y: pct(levelPos(v)), dy: 4 }, v);
}
readoutY(byId('imp-y'), levelPos(11.7), 25, '11.7');

for (let t = -850; t <= 750; t += 50) {
  const label = t === 0 ? '-0u' : t === 750 ? '750us' : t + 'u';
  add(byId('imp-x'), 'text', { x: pct(timePos(t)), y: 16 }, label);
}
readoutX(byId('imp-x'), 33, '-910u');
```
